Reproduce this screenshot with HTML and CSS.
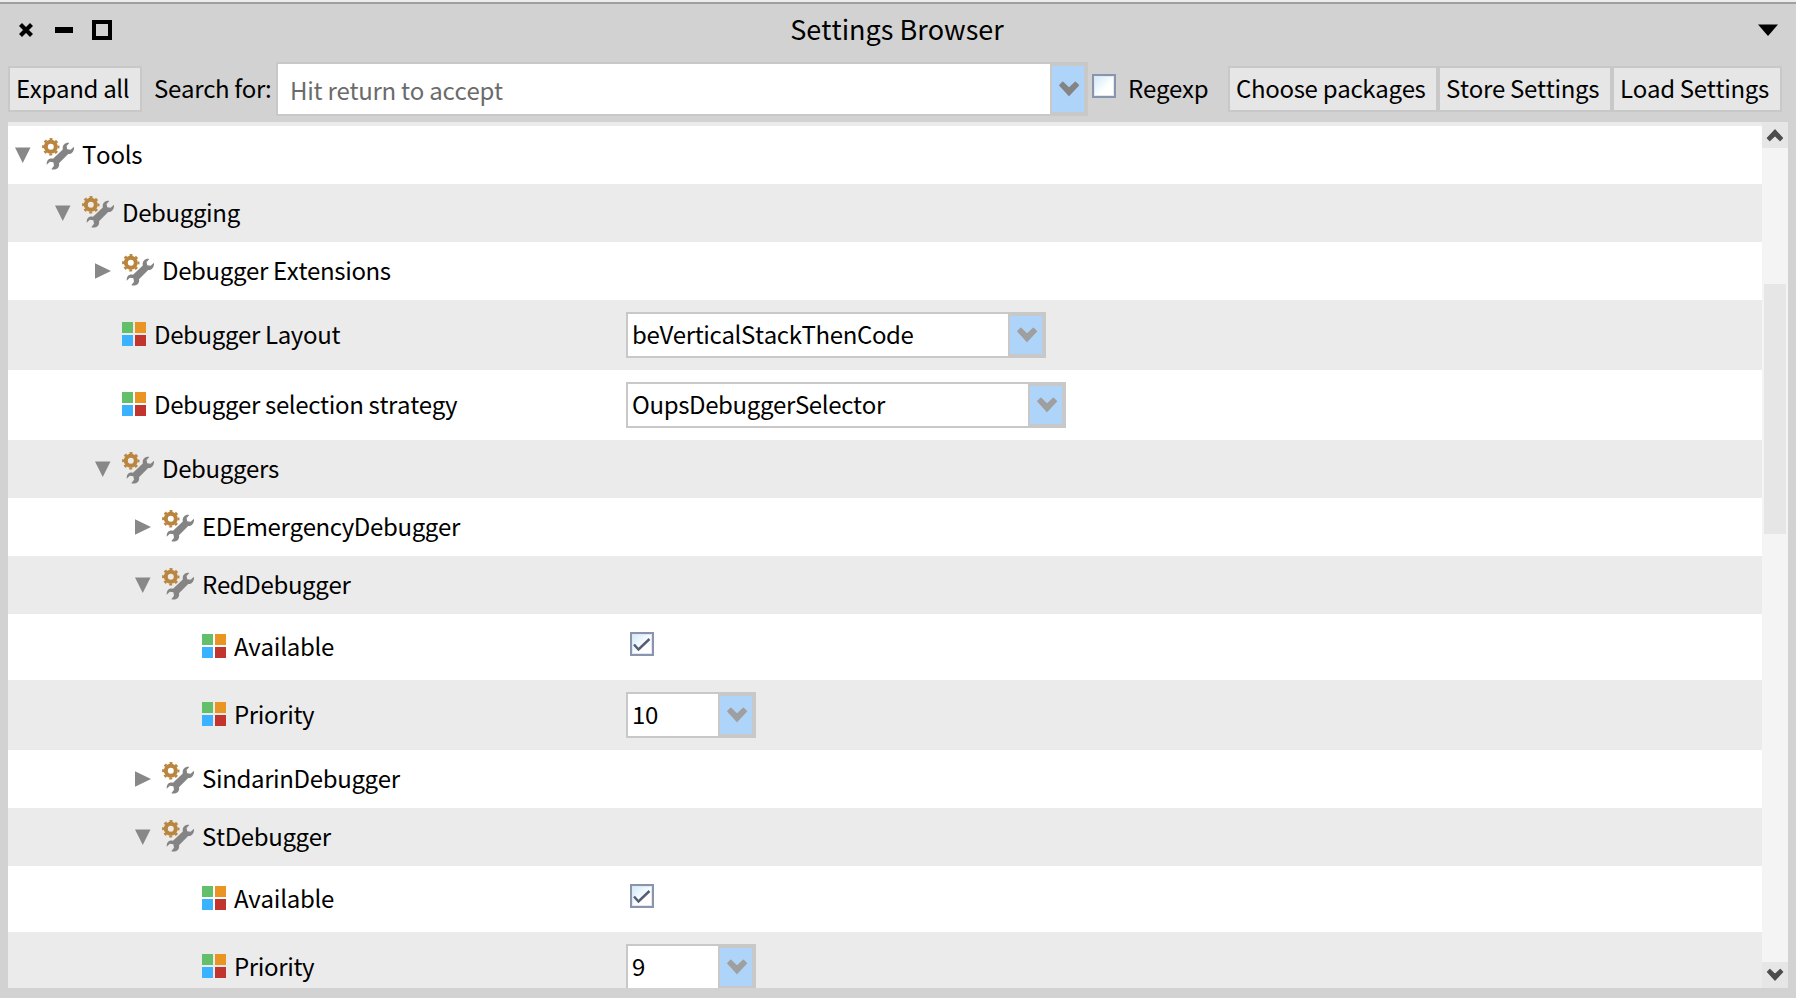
FILE: index.html
```html
<!DOCTYPE html>
<html lang="en">
<head>
<meta charset="utf-8">
<title>Settings Browser</title>
<link rel="stylesheet" href="styles.css">
</head>
<body>
<svg class="defs" aria-hidden="true">
  <symbol id="tools" viewBox="0 0 32 32">
    <circle cx="8.8" cy="8.8" r="5" fill="none" stroke="#b9853f" stroke-width="4"/>
    <circle cx="8.8" cy="8.8" r="7.7" fill="none" stroke="#b9853f" stroke-width="2" stroke-dasharray="3 3.048" stroke-dashoffset="1.5"/>
    <path d="M27.3 5C23.5 4.2 20 7 20.8 11.4L11 20.8C7.4 19.6 4.4 22 4.7 26.8L7.8 23.8L11.4 24.2L12 27.8L9.3 31.2C14 32.8 18 29.4 17 25.2L26.2 16C29.8 16.2 32.4 13 32 8.8L28.6 11.8L25.2 11.2L24.6 8Z" fill="#848484"/>
  </symbol>
  <symbol id="chev" viewBox="0 0 22 16"><path d="M1.8 4.2L4.8 1.2L11 7.2L17.4 1.2L20.4 4.2L11 14.4Z" stroke-linejoin="round" stroke-width="1.4" stroke="currentColor" fill="currentColor"/></symbol>
  <symbol id="open" viewBox="0 0 16 16"><path d="M0 .5H15.500L7.750 16Z" fill="#888"/></symbol>
  <symbol id="closed" viewBox="0 0 16 16"><path d="M0 .2V15.800L16 8Z" fill="#888"/></symbol>
  <symbol id="tick" viewBox="0 0 20 20"><path d="M2 10.500L6.500 15.500L17.500 5" fill="none" stroke="#545e75" stroke-width="2.500"/></symbol>
</svg>
<div class="window">
  <header class="titlebar">
    <div class="controls">
      <svg class="close" viewBox="0 0 14 14"><path d="M1.500 1.500L12.500 12.500M12.500 1.500L1.500 12.500" stroke="#000" stroke-width="4.200"/></svg>
      <i class="minimize"></i><i class="maximize"></i>
    </div>
    <h1>Settings Browser</h1>
    <svg class="menu" viewBox="0 0 20 12"><path d="M0 .5H20L10 12Z"/></svg>
  </header>
  <div class="toolbar">
    <div class="button expand"><span class="t">Expand all</span></div>
    <span class="t search-label">Search for:</span>
    <div class="combo search"><div class="value"><span class="t">Hit return to accept</span></div><div class="drop"><svg><use href="#chev"/></svg></div></div>
    <i class="check regexp"></i>
    <span class="t regexp-label">Regexp</span>
    <div class="button choose"><span class="t">Choose packages</span></div>
    <div class="button store"><span class="t">Store Settings</span></div>
    <div class="button load"><span class="t">Load Settings</span></div>
  </div>
  <div class="pane">
    <div class="list">
      <div class="row group l0"><div class="name"><svg class="arrow"><use href="#open"/></svg><svg class="tool"><use href="#tools"/></svg><span class="t">Tools</span></div></div>
      <div class="row group l1"><div class="name"><svg class="arrow"><use href="#open"/></svg><svg class="tool"><use href="#tools"/></svg><span class="t">Debugging</span></div></div>
      <div class="row group l2"><div class="name"><svg class="arrow"><use href="#closed"/></svg><svg class="tool"><use href="#tools"/></svg><span class="t">Debugger Extensions</span></div></div>
      <div class="row setting l2"><div class="name"><i class="tiles"><b></b><b></b><b></b><b></b></i><span class="t">Debugger Layout</span></div><div class="combo layout"><div class="value"><span class="t">beVerticalStackThenCode</span></div><div class="drop"><svg><use href="#chev"/></svg></div></div></div>
      <div class="row setting l2"><div class="name"><i class="tiles"><b></b><b></b><b></b><b></b></i><span class="t">Debugger selection strategy</span></div><div class="combo strategy"><div class="value"><span class="t">OupsDebuggerSelector</span></div><div class="drop"><svg><use href="#chev"/></svg></div></div></div>
      <div class="row group l2"><div class="name"><svg class="arrow"><use href="#open"/></svg><svg class="tool"><use href="#tools"/></svg><span class="t">Debuggers</span></div></div>
      <div class="row group l3"><div class="name"><svg class="arrow"><use href="#closed"/></svg><svg class="tool"><use href="#tools"/></svg><span class="t">EDEmergencyDebugger</span></div></div>
      <div class="row group l3"><div class="name"><svg class="arrow"><use href="#open"/></svg><svg class="tool"><use href="#tools"/></svg><span class="t">RedDebugger</span></div></div>
      <div class="row setting flag l4"><div class="name"><i class="tiles"><b></b><b></b><b></b><b></b></i><span class="t">Available</span></div><i class="check"><svg><use href="#tick"/></svg></i></div>
      <div class="row setting l4"><div class="name"><i class="tiles"><b></b><b></b><b></b><b></b></i><span class="t">Priority</span></div><div class="combo number"><div class="value"><span class="t">10</span></div><div class="drop"><svg><use href="#chev"/></svg></div></div></div>
      <div class="row group l3"><div class="name"><svg class="arrow"><use href="#closed"/></svg><svg class="tool"><use href="#tools"/></svg><span class="t">SindarinDebugger</span></div></div>
      <div class="row group l3"><div class="name"><svg class="arrow"><use href="#open"/></svg><svg class="tool"><use href="#tools"/></svg><span class="t">StDebugger</span></div></div>
      <div class="row setting flag l4"><div class="name"><i class="tiles"><b></b><b></b><b></b><b></b></i><span class="t">Available</span></div><i class="check"><svg><use href="#tick"/></svg></i></div>
      <div class="row setting l4"><div class="name"><i class="tiles"><b></b><b></b><b></b><b></b></i><span class="t">Priority</span></div><div class="combo number"><div class="value"><span class="t">9</span></div><div class="drop"><svg><use href="#chev"/></svg></div></div></div>
    </div>
    <div class="scrollbar">
      <div class="step up"><svg><use href="#chev"/></svg></div>
      <div class="track"><div class="thumb"></div></div>
      <div class="step"><svg><use href="#chev"/></svg></div>
    </div>
  </div>
</div>
</body>
</html>
```
FILE: styles.css
```css
* { box-sizing: border-box; }
body { margin: 0; font-family: "Noto Sans CJK SC", "Noto Sans", sans-serif; font-size: 24px; line-height: 36px; color: #000; overflow: hidden; font-kerning: none; }
svg { display: block; flex: none; }
i { display: block; flex: none; }
.defs { position: absolute; width: 0; height: 0; }
.t { white-space: pre; display: block; letter-spacing: -0.32px; }
.window { height: 998px; border-top: 2px solid #ededed; background: #d2d2d2; display: flex; flex-direction: column; }

.titlebar { height: 58px; border-top: 2px solid #9f9f9f; display: grid; grid-template-columns: 1fr auto 1fr; align-items: center; padding: 0 18px 4px 19px; flex: none; }
.controls { display: flex; align-items: center; }
.close { width: 14px; height: 14px; }
.minimize { width: 18px; height: 6px; background: #000; margin-left: 22px; }
.maximize { width: 20px; height: 20px; border: 4px solid #000; margin-left: 19px; }
h1 { margin: 0 3px 3px 0; font-size: 27px; font-weight: 400; line-height: 40px; white-space: pre; }
.menu { width: 20px; height: 12px; justify-self: end; }

.toolbar { height: 62px; display: flex; align-items: flex-start; padding: 2px 14px 0 8px; flex: none; }
.button { height: 46px; margin-top: 4px; border: 2px solid #c8c8c8; background: #e6e6e6; padding: 2px 0 0 6px; flex: none; }
.expand { width: 134px; }
.search-label { width: 122px; margin: 8px 0 0 12px; flex: none; }
.regexp-label { width: 100px; margin: 8px 0 0 12px; flex: none; }
.choose { width: 210px; }
.store { width: 174px; }
.load { width: 170px; }

.combo { display: flex; height: 46px; border: 2px solid #c8c8c8; background: #c8c8c8; flex: none; }
.value { flex: 1; background: #fff; padding: 2px 0 0 4px; }
.value .t { letter-spacing: -0.37px; }
.drop { width: 32px; margin: 2px 2px 2px 2px; background: #afd4f9; color: #9f9f9f; display: flex; align-items: center; justify-content: center; }
.drop svg { width: 22px; height: 16px; }
.search { width: 812px; height: 54px; }
.search .value { padding: 8px 0 0 12px; color: #6b6b6b; }
.search .t { letter-spacing: -0.27px; }
.search .drop { color: #848484; }
.layout { width: 420px; }
.strategy { width: 440px; }
.number { width: 130px; }

.check { width: 24px; height: 24px; border: 2px solid #8995ae; background: linear-gradient(135deg, #cdeafa 0%, #fff 60%); box-shadow: inset 0 0 0 1px #e3e8f0; }
.check svg { width: 20px; height: 20px; }
.regexp { margin: 12px 0 0 4px; }

.pane { display: flex; height: 866px; margin: 0 8px; flex: none; overflow: hidden; }
.list { flex: 1; border-top: 4px solid #ebebeb; overflow: hidden; }
.row { display: flex; align-items: center; background: #fff; }
.row:nth-child(even) { background: #ebebeb; }
.group { height: 58px; }
.setting { height: 70px; }
.flag { height: 66px; }
.name { width: 618px; display: flex; align-items: center; flex: none; }
.name .t { margin-bottom: 2px; letter-spacing: -0.36px; }
.flag .t, .l0 .t { letter-spacing: -0.27px; }
.l0 .name { padding-left: 7px; }
.l1 .name { padding-left: 47px; }
.l2 .name { padding-left: 87px; }
.l3 .name { padding-left: 127px; }
.l4 .name { padding-left: 167px; }
.arrow { width: 16px; height: 16px; margin-right: 11px; }
.tool { width: 32px; height: 32px; margin: 0 8px 2px 0; }
.setting .name { gap: 8px; }
.l2.setting .name { padding-left: 114px; }
.l4.setting .name { padding-left: 194px; }
.tiles { width: 24px; height: 24px; margin-bottom: 2px; display: grid; grid-template-columns: 11px 11px; gap: 2px; }
.tiles b { background: #64bf6a; height: 11px; }
.tiles b:nth-child(2) { background: #e99423; }
.tiles b:nth-child(3) { background: #3ab2ff; }
.tiles b:nth-child(4) { background: #c2352f; }
.flag .check { margin: 0 0 6px 4px; }

.drop svg { margin-left: 1px; }
.scrollbar { width: 26px; display: flex; flex-direction: column; background: #f4f4f4; color: #4c4c4c; }
.step { height: 26px; background: #e6e6e6; display: flex; align-items: center; justify-content: center; flex: none; }
.step svg { width: 18px; height: 14px; }
.up svg { transform: rotate(180deg); }
.track { flex: 1; padding: 136px 2px 0; }
.thumb { height: 250px; background: #e6e6e6; }
```
